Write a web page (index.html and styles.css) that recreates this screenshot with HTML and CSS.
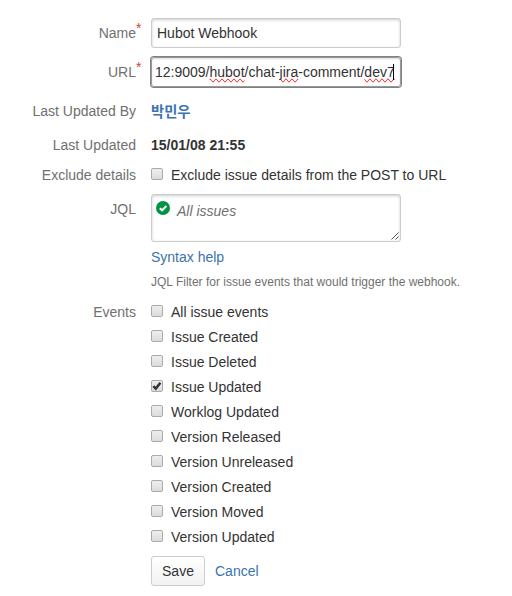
FILE: index.html
```html
<!DOCTYPE html>
<html lang="en">
<head>
<meta charset="utf-8">
<title>Webhook</title>
<link rel="stylesheet" href="styles.css">
</head>
<body>
<form class="form">
  <div class="row name-row"><div class="label">Name<span class="required">*</span></div><div class="field">Hubot Webhook</div></div>
  <div class="row url-row"><div class="label">URL<span class="required">*</span></div><div class="field focused">12:9009/<span class="misspelled">hubot</span>/chat-<span class="misspelled">jira</span>-comment/<span class="misspelled">dev7</span><i class="caret"></i></div></div>
  <div class="row user-row"><div class="label">Last Updated By</div><a class="user">박민우</a></div>
  <div class="row date-row"><div class="label">Last Updated</div><strong>15/01/08 21:55</strong></div>
  <div class="row exclude-row"><div class="label">Exclude details</div><div class="option"><span class="box"></span>Exclude issue details from the POST to URL</div></div>
  <div class="row jql-row"><div class="label">JQL</div>
    <div>
      <div class="field query">
        <svg class="valid" width="14" height="14" viewBox="0 0 14 14"><circle cx="7" cy="7" r="7" fill="#009440"/><path d="M3.8 7.2 6.1 9.3 10.4 5" fill="none" stroke="#fff" stroke-width="2"/></svg>
        <span class="placeholder">All issues</span>
        <svg class="grip" width="8" height="8" viewBox="0 0 8 8"><path d="M.5 7.5l7-7M4.5 7.5l3-3" stroke="#555" fill="none"/></svg>
      </div>
      <a class="help">Syntax help</a>
      <div class="description">JQL Filter for issue events that would trigger the webhook.</div>
    </div>
  </div>
  <div class="row events-row"><div class="label">Events</div>
    <div class="events">
      <div class="option"><span class="box"></span>All issue events</div>
      <div class="option"><span class="box"></span>Issue Created</div>
      <div class="option"><span class="box"></span>Issue Deleted</div>
      <div class="option"><span class="box"><svg class="tick" width="10" height="10" viewBox="0 0 10 10"><path d="M1.3 5.2 3.8 7.6 8.4 1.8" fill="none" stroke="#333" stroke-width="2.5"/></svg></span>Issue Updated</div>
      <div class="option"><span class="box"></span>Worklog Updated</div>
      <div class="option"><span class="box"></span>Version Released</div>
      <div class="option"><span class="box"></span>Version Unreleased</div>
      <div class="option"><span class="box"></span>Version Created</div>
      <div class="option"><span class="box"></span>Version Moved</div>
      <div class="option"><span class="box"></span>Version Updated</div>
    </div>
  </div>
  <div class="row"><div></div><div class="actions"><span class="save">Save</span><a>Cancel</a></div></div>
</form>
</body>
</html>
```
FILE: styles.css
```css
* { box-sizing: border-box; }
body {
  margin: 0;
  background: #fff;
  color: #333;
  font: 14px/20px "Liberation Sans", "Noto Sans CJK KR", sans-serif;
}
.form { padding-top: 18px; }
.row {
  display: grid;
  grid-template-columns: 136px 1fr;
  column-gap: 15px;
}
.label { position: relative; color: #707070; text-align: right; }
.required {
  position: absolute;
  left: 100%;
  top: 0;
  color: #d04437;
}
a { color: #3b73af; }
.field {
  position: relative;
  width: 250px;
  height: 30px;
  padding: 4px 5px;
  border: 1px solid #ccc;
  border-radius: 3px;
  box-shadow: inset 0 1px 3px #ccc;
  white-space: nowrap;
}
.focused {
  padding-left: 3px;
  border-color: #999;
  box-shadow: 0 0 0 1px #808080, inset 0 1px 2px #ddd;
}
.name-row .label, .url-row .label { padding-top: 5px; }
.name-row { margin-bottom: 9px; }
.url-row { margin-bottom: 14px; }
.user-row { margin-bottom: 14px; }
.date-row { margin-bottom: 10px; }
.exclude-row { margin-bottom: 9px; }
.jql-row { margin-bottom: 10px; }
.jql-row .label { padding-top: 5px; }
.user { height: 20px; padding-top: 1px; font-size: 14.3px; font-weight: bold; }
.misspelled { text-decoration-line: spelling-error; }
.caret {
  position: absolute;
  left: 241px;
  top: 6px;
  width: 1px;
  height: 16px;
  background: #000;
}
.option { display: flex; }
.box {
  width: 12px;
  height: 12px;
  margin: 3px 8px 0 0;
  border: 1px solid #aaa;
  border-radius: 2px;
  background: linear-gradient(#eee, #dcdcdc);
}
.query { height: 48px; padding: 6px 5px; }
.valid { position: absolute; left: 4px; top: 6px; }
.placeholder { margin-left: 20px; color: #707070; font-style: italic; }
.grip { position: absolute; right: 1px; bottom: 1px; }
.tick { display: block; }
.help { display: block; margin-top: 5px; }
.description { margin-top: 5px; color: #707070; font-size: 12px; }
.events { display: grid; row-gap: 5px; margin-bottom: 9px; }
.actions { display: flex; gap: 10px; line-height: 30px; }
.save {
  width: 54px;
  height: 30px;
  border: 1px solid #ccc;
  border-radius: 3px;
  background: linear-gradient(#fff, #f2f2f2);
  line-height: 28px;
  text-align: center;
}
```
